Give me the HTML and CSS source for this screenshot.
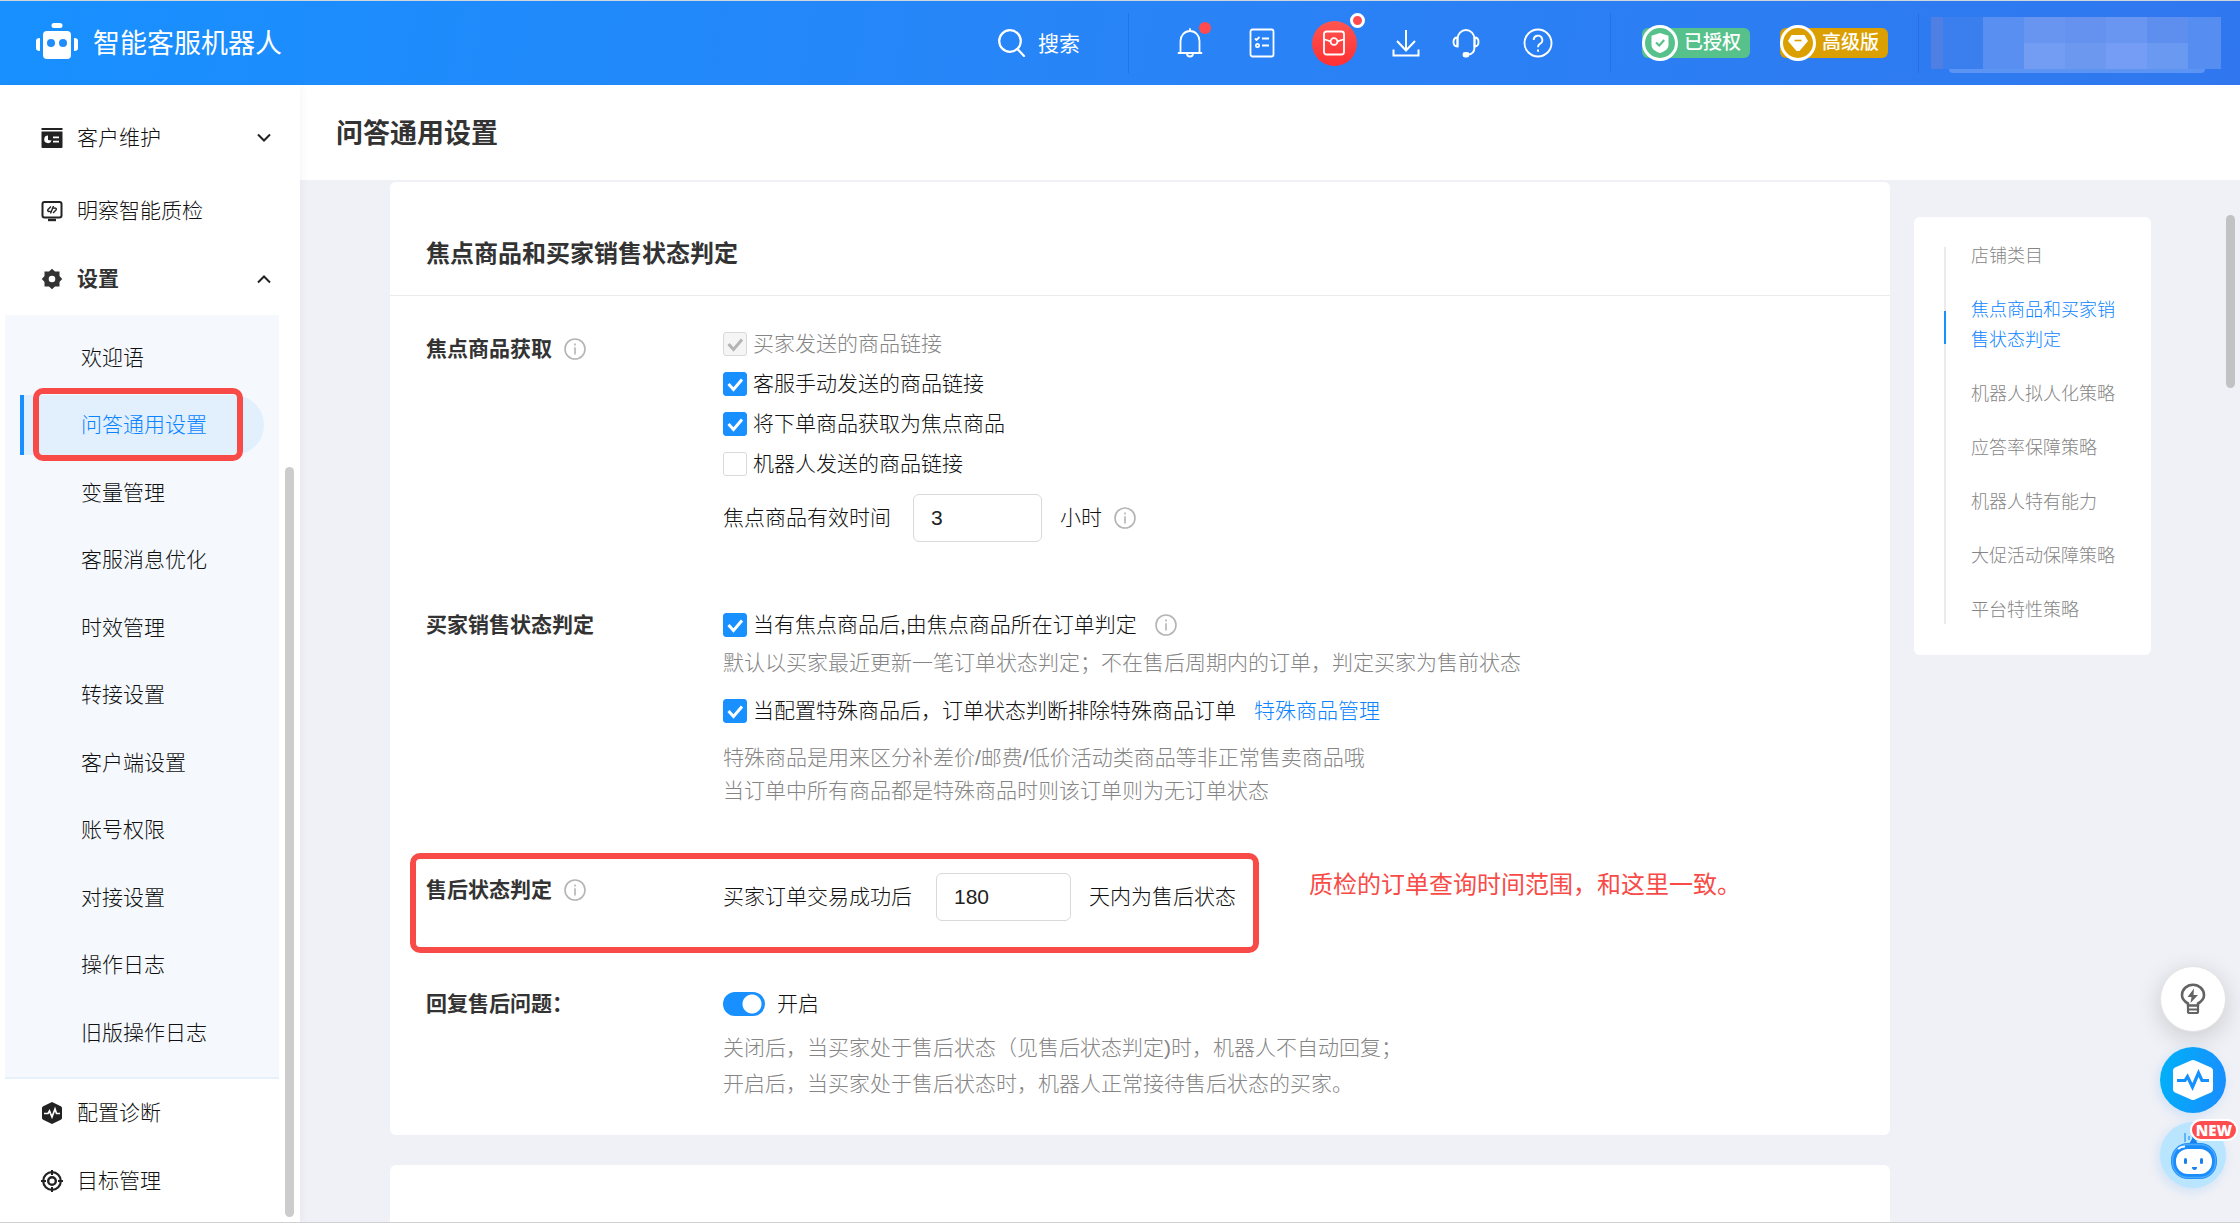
FILE: index.html
```html
<!DOCTYPE html>
<html lang="zh-CN">
<head>
<meta charset="utf-8">
<title>智能客服机器人 - 问答通用设置</title>
<link rel="stylesheet" href="styles.css">
</head>
<body>
<svg width="0" height="0" class="sprite" aria-hidden="true">
  <symbol id="info" viewBox="0 0 22 22"><g fill="none" stroke="#b4b4b4" stroke-width="1.6"><circle cx="11" cy="11" r="10"/><path d="M11 9.2v7.2M11 5.4v2"/></g></symbol>
</svg>
<div class="app">
  <header class="topbar">
    <a class="brand" href="#">
      <svg width="42" height="36" viewBox="0 0 42 36" fill="#fff"><rect x="15.500" width="11" height="5" rx="2.500"/><path d="M11 8h20a4 4 0 0 1 4 4v20a4 4 0 0 1-4 4H11a4 4 0 0 1-4-4V12a4 4 0 0 1 4-4z"/><path d="M4 15v13c-3 0-4-1-4-3v-7c0-2 1-3 4-3zM38 15v13c3 0 4-1 4-3v-7c0-2-1-3-4-3z"/><circle cx="15" cy="20" r="4" fill="#1e8dfb"/><circle cx="27" cy="20" r="4" fill="#1e8dfb"/></svg>
      <span>智能客服机器人</span>
    </a>
    <button class="search" type="button">
      <svg width="28" height="28" viewBox="0 0 28 28" fill="none" stroke="#fff" stroke-width="2.200" stroke-linecap="round"><circle cx="12" cy="12" r="10.800"/><path d="M19.500 20l6.500 7"/></svg>
      <span>搜索</span>
    </button>
    <nav class="tools" aria-label="工具">
      <button type="button" class="tool" aria-label="通知">
        <svg width="28" height="30" viewBox="0 0 28 30" fill="none" stroke="#fff" stroke-width="1.800" stroke-linecap="round" stroke-linejoin="round"><path d="M14 1v2M2.500 25h23M4.500 25V13a9.500 10 0 0 1 19 0v12M11 25.500a3 3 0 0 0 6 0"/></svg>
        <i class="dot"></i>
      </button>
      <button type="button" class="tool" aria-label="任务">
        <svg width="26" height="30" viewBox="0 0 26 30" fill="none" stroke="#fff" stroke-width="1.800"><rect x="1.500" y="1.500" width="23" height="27" rx="2"/><path d="M6 10.500l1.500 1.500 3-3M13 10.500h7M13 17.500h7"/><circle cx="8.500" cy="17.500" r="1.600"/></svg>
      </button>
      <button type="button" class="tool packet" aria-label="红包">
        <svg width="22" height="26" viewBox="0 0 22 26" fill="none" stroke="#fff" stroke-width="1.800"><rect x="1" y="1.500" width="20" height="23" rx="2.500"/><path d="M1.500 9.500c2 .5 4 1 6.300 2.100M20.500 9.500c-2 .5-4 1-6.300 2.100"/><circle cx="11" cy="11.500" r="3.400"/></svg>
        <i class="dot ring"></i>
      </button>
      <button type="button" class="tool" aria-label="下载">
        <svg width="28" height="28" viewBox="0 0 28 28" fill="none" stroke="#fff" stroke-width="2"><path d="M14 1v20M5 12l9 9.500 9-9.500M1.500 20.500v6h25v-6"/></svg>
      </button>
      <button type="button" class="tool" aria-label="客服">
        <svg width="28" height="30" viewBox="0 0 28 30" fill="none" stroke="#fff" stroke-width="1.900"><path d="M5.500 18.500V11a8.500 9 0 0 1 17 0v8c0 5-2 7.500-7 7.500"/><path d="M5.500 9.500C2.500 9.500 1.500 11 1.500 14s1 4.500 4 4.500zM22.500 9.500c3 0 4 1.500 4 4.500s-1 4.500-4 4.500z"/><rect x="11.500" y="25" width="5" height="3.500" rx="1.500" fill="#fff"/></svg>
      </button>
      <button type="button" class="tool" aria-label="帮助">
        <svg width="30" height="30" viewBox="0 0 30 30" fill="none" stroke="#fff" stroke-width="1.900"><circle cx="15" cy="15" r="13.500"/><path d="M10.700 12a4.300 4.300 0 1 1 6.200 3.800c-1.300.7-1.900 1.500-1.900 3.400M15 21.500v2.200"/></svg>
      </button>
    </nav>
    <div class="plans">
      <span class="plan plan-auth"><i class="seal"><svg width="18" height="20" viewBox="0 0 18 20"><path d="M9 0l8.500 2.800V12c0 4-4 6.500-8.500 8C4.500 18.500.5 16 .5 12V2.800z" fill="#fff"/><path d="M5 9.500l3.200 3 5-5.500" fill="none" stroke="#52c087" stroke-width="2"/></svg></i>已授权</span>
      <span class="plan plan-pro"><i class="seal"><svg width="20" height="18" viewBox="0 0 20 18"><path d="M3.500 1h13L20 7l-8.500 10h-3L0 7z" fill="#fff"/><path d="M6.500 6.500h7" stroke="#dba000" stroke-width="1.600"/></svg></i>高级版</span>
    </div>
    <div class="account">
      <div class="mosaic"><i class="m1"></i><i class="m2"></i><i class="m3"></i><i class="m4"></i><i class="m5"></i><i class="m6"></i><i class="m7"></i><i class="m8"></i></div>
      <div class="mosaic-foot"></div>
    </div>
  </header>

  <div class="body">
    <aside class="sidebar">
      <a class="menu menu-first" href="#">
        <svg width="22" height="22" viewBox="0 0 22 22"><path d="M.5 1h21v2H.5zM.5 4.500h21V20a1 1 0 0 1-1 1h-19a1 1 0 0 1-1-1z" fill="#222"/><path d="M7 8.500a3.800 3.800 0 1 0 3.600 5L7 13zM12 9.500h6v1.800h-6zM12 13.800h6v1.800h-6z" fill="#fff"/></svg>
        <span>客户维护</span>
        <svg class="chev" width="14" height="10" viewBox="0 0 14 10" fill="none" stroke="#222" stroke-width="2"><path d="M1 1.500l6 6 6-6"/></svg>
      </a>
      <a class="menu" href="#">
        <svg width="22" height="22" viewBox="0 0 22 22" fill="none" stroke="#222" stroke-width="2"><rect x="1.500" y="2" width="19" height="15.500" rx="2"/><path d="M7 20h8" stroke-width="2.400"/><path d="M10 6.500l-3 3c-1 1 .5 3 2.500 1.500M12 13l3-3c1-1-.5-3-2.500-1.500M12.500 6l-3 7.500" stroke-width="1.400"/></svg>
        <span>明察智能质检</span>
      </a>
      <a class="menu menu-open" href="#">
        <svg width="22" height="22" viewBox="0 0 22 22" fill="#333"><path fill-rule="evenodd" d="M11 .8l3 2.700h4.500V8l2.700 3-2.700 3v4.500H14l-3 2.700-3-2.700H3.500V14L.8 11l2.700-3V3.500H8zM11 7.700a3.300 3.300 0 1 0 0 6.600 3.300 3.300 0 0 0 0-6.600z"/></svg>
        <span>设置</span>
        <svg class="chev" width="14" height="10" viewBox="0 0 14 10" fill="none" stroke="#222" stroke-width="2"><path d="M1 8.500l6-6 6 6"/></svg>
      </a>
      <ul class="submenu">
        <li><a href="#">欢迎语</a></li>
        <li class="active"><a href="#" aria-current="page">问答通用设置</a><i class="mark mark-menu"></i></li>
        <li><a href="#">变量管理</a></li>
        <li><a href="#">客服消息优化</a></li>
        <li><a href="#">时效管理</a></li>
        <li><a href="#">转接设置</a></li>
        <li><a href="#">客户端设置</a></li>
        <li><a href="#">账号权限</a></li>
        <li><a href="#">对接设置</a></li>
        <li><a href="#">操作日志</a></li>
        <li><a href="#">旧版操作日志</a></li>
      </ul>
      <a class="menu" href="#">
        <svg width="22" height="24" viewBox="0 0 22 24"><path d="M11 1l8.800 4.200a2 2 0 0 1 1.200 1.800v10a2 2 0 0 1-1.200 1.800L11 23l-8.800-4.200A2 2 0 0 1 1 17V7a2 2 0 0 1 1.200-1.800z" fill="#222"/><path d="M3 12.500h4l1.500-2.500 2.500 6 3-8 1.500 4.500H19" fill="none" stroke="#fff" stroke-width="1.700"/></svg>
        <span>配置诊断</span>
      </a>
      <a class="menu" href="#">
        <svg width="22" height="24" viewBox="0 0 22 24" fill="none" stroke="#222"><circle cx="11" cy="12" r="8.800" stroke-width="2.200"/><circle cx="11" cy="12" r="3.800" stroke-width="2.400"/><path d="M11 1v5M11 18v5M0 12h5M17 12h5" stroke-width="2"/></svg>
        <span>目标管理</span>
      </a>
      <i class="thumb thumb-side"></i>
    </aside>

    <main class="main">
      <div class="page-head"><h1>问答通用设置</h1></div>
      <div class="content">
        <div class="cards">
          <section class="card">
            <h2>焦点商品和买家销售状态判定</h2>
            <div class="group group-focus">
              <h3>焦点商品获取<svg class="info" width="22" height="22"><use href="#info"/></svg></h3>
              <div>
                <label class="check disabled"><input type="checkbox" checked disabled>买家发送的商品链接</label>
                <label class="check"><input type="checkbox" checked>客服手动发送的商品链接</label>
                <label class="check"><input type="checkbox" checked>将下单商品获取为焦点商品</label>
                <label class="check"><input type="checkbox">机器人发送的商品链接</label>
                <div class="field field-hours">
                  <label for="hours">焦点商品有效时间</label><input id="hours" type="text" value="3"><span>小时</span><svg class="info" width="22" height="22"><use href="#info"/></svg>
                </div>
              </div>
            </div>
            <div class="group">
              <h3>买家销售状态判定</h3>
              <div>
                <div class="line"><label class="check"><input type="checkbox" checked>当有焦点商品后,由焦点商品所在订单判定</label><svg class="info" width="22" height="22"><use href="#info"/></svg></div>
                <p class="hint">默认以买家最近更新一笔订单状态判定；不在售后周期内的订单，判定买家为售前状态</p>
                <div class="line line-next"><label class="check"><input type="checkbox" checked>当配置特殊商品后，订单状态判断排除特殊商品订单</label><a class="link" href="#">特殊商品管理</a></div>
                <p class="hint hint-tight">特殊商品是用来区分补差价/邮费/低价活动类商品等非正常售卖商品哦<br>当订单中所有商品都是特殊商品时则该订单则为无订单状态</p>
              </div>
            </div>
            <div class="group group-after">
              <h3>售后状态判定<svg class="info" width="22" height="22"><use href="#info"/></svg></h3>
              <div class="field">
                <label for="days">买家订单交易成功后</label><input id="days" type="text" value="180"><span>天内为售后状态</span>
              </div>
              <i class="mark mark-row"></i>
              <p class="note">质检的订单查询时间范围，和这里一致。</p>
            </div>
            <div class="group">
              <h3>回复售后问题：</h3>
              <div>
                <label class="switch"><input type="checkbox" role="switch" checked>开启</label>
                <p class="hint hint-switch">关闭后，当买家处于售后状态（见售后状态判定)时，机器人不自动回复；<br>开启后，当买家处于售后状态时，机器人正常接待售后状态的买家。</p>
              </div>
            </div>
          </section>
          <section class="card card-next"></section>
        </div>
        <nav class="anchors" aria-label="页内导航">
          <ul>
            <li><a href="#">店铺类目</a></li>
            <li class="current"><a href="#">焦点商品和买家销售状态判定</a></li>
            <li><a href="#">机器人拟人化策略</a></li>
            <li><a href="#">应答率保障策略</a></li>
            <li><a href="#">机器人特有能力</a></li>
            <li><a href="#">大促活动保障策略</a></li>
            <li><a href="#">平台特性策略</a></li>
          </ul>
        </nav>
      </div>
      <i class="thumb thumb-main"></i>
      <div class="floats">
        <button class="float-btn tip" type="button" aria-label="建议">
          <svg width="26" height="32" viewBox="0 0 26 32" fill="none" stroke="#636363" stroke-width="2.600"><path d="M8 22.500v-2C4.500 18.500 2 15.800 2 12.300a11 10.600 0 0 1 22 0c0 3.500-2.500 6.200-6 8.200v2z" stroke-linejoin="round"/><path d="M8 22.500v6a1.500 1.500 0 0 0 1.500 1.500h7a1.500 1.500 0 0 0 1.500-1.500v-6M8 26.500h10" stroke-width="2.200"/><path d="M14 5.500L7.500 14h4l-1 6L18 12h-4.500z" fill="#636363" stroke="none"/></svg>
        </button>
        <button class="float-btn pulse" type="button" aria-label="诊断">
          <svg width="40" height="42" viewBox="0 0 40 42"><path d="M18 1.500q2-1 4 0l16 7q2 1 2 3v19q0 2-2 3l-16 7q-2 1-4 0l-16-7q-2-1-2-3v-19q0-2 2-3z" fill="#fff"/><path d="M4 21.500h8l2.500-4L19.500 28l6-14 3.500 7.500h7" fill="none" stroke="#1590ff" stroke-width="3.200"/></svg>
        </button>
        <button class="float-btn bot" type="button" aria-label="机器人助手">
          <svg width="66" height="66" viewBox="0 0 66 66"><path d="M25 11v9M29 14v4M37 14v5M42 16v3" stroke="#45a6f5" stroke-width="1.500"/><path d="M29 22l3-5 1-5 2 5 3 5z" fill="#1681ee"/><rect x="11" y="21" width="46" height="36" rx="17" fill="#1b8dfa"/><rect x="12.500" y="22.500" width="43" height="33" rx="15.500" fill="none" stroke="#49a9ff" stroke-width="1.500"/><rect x="16" y="27" width="36" height="25" rx="12" fill="#fff"/><path d="M18 27q3-2.500 7-2.500" stroke="#fff" stroke-width="1.800" fill="none"/><rect x="24" y="36" width="3" height="6" rx="1.500" fill="#1681ee"/><rect x="40" y="36" width="3" height="6" rx="1.500" fill="#1681ee"/><path d="M32 45h5q0 3-2.500 3T32 45z" fill="#1681ee"/></svg>
          <span class="new">NEW</span>
        </button>
      </div>
    </main>
  </div>
</div>
</body>
</html>
```
FILE: styles.css
```css
* { box-sizing: border-box; }

body {
  margin: 0;
  font-family: "Liberation Sans", "Noto Sans CJK SC", sans-serif;
  font-size: 21px;
  font-weight: 300;
  line-height: 30px;
  color: #111;
  background: #fff;
  text-spacing-trim: space-all;
}

h1, h2, h3, p, ul { margin: 0; padding: 0; }
ul { list-style: none; }
a { color: inherit; text-decoration: none; }
button { padding: 0; border: 0; background: none; color: inherit; font: inherit; }
svg { display: block; flex: none; }
.sprite { position: absolute; }

.app {
  display: flex;
  flex-direction: column;
  height: 100vh;
  overflow: hidden;
  border-top: 1px solid #cfd6dc;
  border-bottom: 1px solid #d0d0d0;
}

/* Top bar */
.topbar {
  display: flex;
  align-items: center;
  flex: none;
  height: 84px;
  padding: 0 19px 0 36px;
  font-weight: 400;
  color: #fff;
  background: linear-gradient(100deg, #1890ff 0%, #2884f7 50%, #3077ef 100%);
}
.brand { display: flex; align-items: center; gap: 15px; font-size: 27px; line-height: 36px; }
.brand svg { margin-bottom: 4px; }
.brand span, .search span { padding-top: 2px; }
.search { display: flex; align-items: center; gap: 12px; margin-left: auto; }
.tools {
  display: flex;
  align-items: center;
  height: 60px;
  margin-left: 48px;
  padding: 0 57px 0 46px;
  border: solid rgba(0, 40, 120, .14);
  border-width: 0 1px;
}
.tool { position: relative; display: flex; align-items: center; justify-content: center; width: 30px; height: 45px; margin-right: 42px; }
.tool:last-child { margin-right: 0; }
.tool:nth-child(4) { margin-right: 30px; }
.tool.packet { width: 45px; margin: 0 34px 0 -7px; border-radius: 50%; background: linear-gradient(#ff5550, #ff2f33); }
.dot { position: absolute; top: 1px; right: -6px; width: 12px; height: 12px; border-radius: 50%; background: #ff4b4f; }
.dot.ring { top: -8px; right: -8px; width: 15px; height: 15px; border: 3px solid #fff; }

.plans { display: flex; align-items: center; gap: 30px; height: 60px; padding: 0 30px 0 31px; border-right: 1px solid rgba(0, 40, 120, .14); }
.plan {
  display: flex;
  align-items: center;
  height: 30px;
  padding-right: 9px;
  border-radius: 6px;
  font-size: 19px;
  font-weight: 500;
}
.plan-auth { background: #56c18a; }
.plan-pro { background: #dba000; }
.seal { display: flex; align-items: center; justify-content: center; width: 36px; height: 36px; margin-right: 6px; border: 3px solid #fff; border-radius: 50%; background: inherit; }
.account { padding: 4px 0 0 12px; }
.mosaic {
  display: grid;
  grid-template-columns: 12px 40px repeat(5, 41px) 33px;
  height: 52px;
}
.m1 { background: #507fe4; }
.m2 { background: #3b7fee; }
.m3 { background: #588ff1; }
.m4 { background: linear-gradient(#6795ef 50%, #739cf3 50%); }
.m5 { background: linear-gradient(#6592ee 50%, #6c98f0 50%); }
.m6 { background: linear-gradient(#6896f0 50%, #759df5 50%); }
.m7 { background: linear-gradient(#5e8fee 50%, #6999f1 50%); }
.m8 { background: #568df0; }
.mosaic-foot { height: 4px; margin: 0 16px 0 18px; border-radius: 0 0 6px 6px; background: #5b94f3; }

.body { display: flex; flex: 1; min-height: 0; }

/* Sidebar */
.sidebar {
  position: relative;
  z-index: 1;
  flex: none;
  width: 300px;
  padding-top: 19px;
  background: #fff;
  box-shadow: 2px 0 8px rgba(0, 0, 40, .04);
}
.menu { display: flex; align-items: center; gap: 14px; height: 68px; padding: 0 29px 0 41px; }
.menu-first { margin-bottom: 5px; }
.menu-open { margin-bottom: 2px; font-weight: 700; color: #333; }
.chev { margin-left: auto; }
.submenu { margin: 0 21px 0 5px; padding: 13px 15px 7px; border-bottom: 2px solid #e6f1fb; background: #f5f9fd; }
.submenu li { position: relative; height: 60px; margin-bottom: 7px; border-left: 4px solid transparent; }
.submenu li:nth-child(even) { margin-bottom: 8px; }
.submenu a { display: block; padding-left: 57px; line-height: 60px; }
.submenu .active { border-color: #1890ff; border-radius: 0 30px 30px 0; background: #e2f0fe; color: #0a84ff; }

.thumb { position: absolute; width: 9px; border-radius: 5px; }
.thumb-side { top: 382px; bottom: 5px; left: 285px; background: #ccc; }
.thumb-main { top: 130px; right: 5px; height: 173px; background: #c1c2c4; }

/* Red outlines drawn over the screen */
.mark { position: absolute; border: 6px solid #f84b48; border-radius: 10px; pointer-events: none; }
.mark-menu { top: -7px; left: 9px; width: 210px; height: 73px; }
.mark-row { top: -20px; left: 20px; width: 849px; height: 100px; }
.note { position: absolute; top: -6px; left: 919px; font-size: 24px; font-weight: 400; line-height: 36px; white-space: nowrap; color: #f84b48; }

/* Main area */
.main { position: relative; display: flex; flex: 1; flex-direction: column; min-width: 0; background: #f0f1f6; }
.page-head { flex: none; padding: 31px 36px 28px; background: #fff; }
h1 { font-size: 27px; line-height: 36px; color: #333; }
.content { display: flex; flex: 1; align-items: flex-start; gap: 24px; min-height: 0; padding: 2px 89px 0 90px; }
.cards { display: flex; flex: 1; flex-direction: column; gap: 30px; min-width: 0; height: 100%; }
.card { flex: none; padding-bottom: 33px; border-radius: 6px; background: #fff; }
.card-next { flex: 1; border-radius: 6px 6px 0 0; padding: 0; }
h2 { padding: 54px 36px 23px; border-bottom: 1px solid #ebebeb; font-size: 24px; line-height: 36px; color: #333; }
.group { position: relative; display: grid; grid-template-columns: 297px 1fr; padding: 0 36px; margin-top: 63px; }
.group-focus { margin-top: 28px; }
.group-focus h3 { padding-top: 10px; }
.group-after { margin-top: 66px; }
.group-after h3 { padding-top: 2px; }
h3 { display: flex; align-items: center; align-self: start; gap: 12px; padding-top: 5px; font-size: 21px; line-height: 30px; color: #333; }

.check { display: flex; align-items: center; gap: 6px; height: 40px; }
.check input {
  flex: none;
  width: 24px;
  height: 24px;
  margin: 0;
  appearance: none;
  border: 1px solid #d9d9d9;
  border-radius: 3px;
  background: #fff;
}
.check input:checked {
  border-color: #1890ff;
  background: #1890ff url("data:image/svg+xml,%3Csvg xmlns='http://www.w3.org/2000/svg' viewBox='0 0 22 22'%3E%3Cpath d='M4.500 11l5 5.500 8.500-10' fill='none' stroke='%23fff' stroke-width='3'/%3E%3C/svg%3E");
}
.check input:disabled {
  border-color: #d9d9d9;
  background: #f5f5f5 url("data:image/svg+xml,%3Csvg xmlns='http://www.w3.org/2000/svg' viewBox='0 0 22 22'%3E%3Cpath d='M4.500 11l5 5.500 8.500-10' fill='none' stroke='%23b5b5b5' stroke-width='3'/%3E%3C/svg%3E");
}
.check.disabled { color: #858585; }

.field { display: flex; align-items: center; }
.field-hours { margin-top: 10px; }
.field input {
  width: 135px;
  height: 48px;
  margin: 0 18px 0 24px;
  padding: 0 17px;
  border: 1px solid #d9d9d9;
  border-radius: 6px;
  font: inherit;
  color: #222;
}
.field-hours input { width: 129px; margin-left: 22px; }
.field .info { margin-left: 12px; }

.line { display: flex; align-items: center; gap: 18px; }
.line-next { margin-top: 10px; }
.link { color: #0a84ff; }
.hint { line-height: 36px; color: #858585; }
.hint-tight { margin-top: 10px; line-height: 33px; }
.hint-switch { margin-top: 6px; }

.switch { display: flex; align-items: center; gap: 12px; height: 40px; }
.switch input {
  width: 42px;
  height: 24px;
  margin: 0;
  appearance: none;
  border-radius: 12px;
  background: radial-gradient(circle at 29px 12px, #fff 9px, #1890ff 10px);
}

/* Section navigation */
.anchors { flex: none; width: 237px; margin-top: 35px; padding: 24px 30px 30px; border-radius: 6px; background: #fff; font-size: 18px; color: #858585; }
.anchors ul { position: relative; display: flex; flex-direction: column; gap: 24px; }
.anchors ul::before { content: ""; position: absolute; top: 6px; bottom: 1px; left: 0; width: 2px; background: #ebebeb; }
.anchors li { position: relative; padding-left: 27px; }
.anchors .current { color: #0a84ff; }
.anchors .current::before { content: ""; position: absolute; top: 16px; left: 0; width: 2px; height: 33px; background: #1890ff; }
.anchors a { display: block; width: 150px; }

/* Floating shortcuts */
.floats { position: absolute; right: 14px; bottom: 34px; display: flex; flex-direction: column; gap: 9px; }
.float-btn { position: relative; display: flex; align-items: center; justify-content: center; width: 66px; height: 66px; border-radius: 50%; }
.tip { margin-bottom: 6px; border: 1px solid #e4e4e4; background: #fff; box-shadow: 0 6px 24px rgba(0, 0, 0, .16); }
.pulse { background: linear-gradient(100deg, #00b2f8, #1a8cff); box-shadow: -2px 3px 12px rgba(24, 144, 255, .16); }
.bot { background: #bae5ff; box-shadow: -2px 3px 12px rgba(24, 144, 255, .16); }
.new {
  position: absolute;
  top: -3px;
  right: -12px;
  padding: 0 4px;
  border: 2px solid #fff;
  border-radius: 11px;
  background: #ff4d4f;
  color: #fff;
  font: 800 15px/18px "Open Sans", sans-serif;
}
```
